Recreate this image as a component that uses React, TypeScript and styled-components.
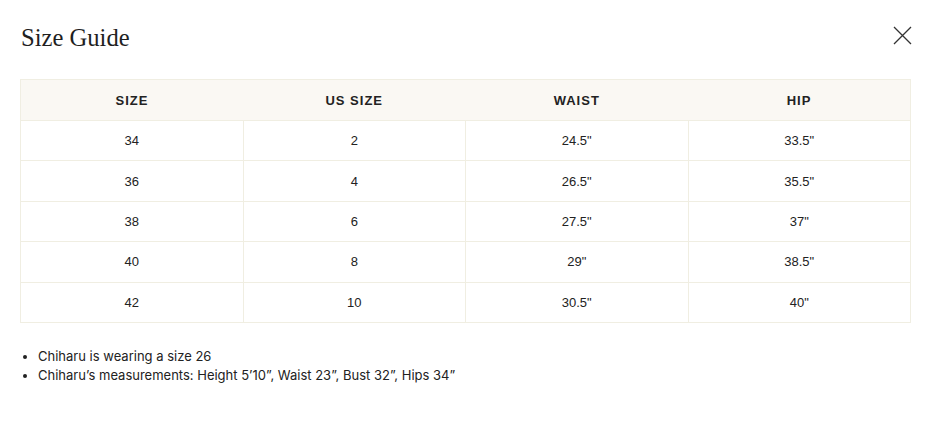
import React from "react";
import styled, { createGlobalStyle } from "styled-components";

const Global = createGlobalStyle`
  html, body { margin: 0; padding: 0; background: #ffffff; }
  body { font-family: "Liberation Sans", Arial, sans-serif; color: #222; }
`;

const Modal = styled.div`
  width: 927px;
  height: 435px;
  box-sizing: border-box;
  padding: 18px 15px 0 20px;
  display: flex;
  flex-direction: column;
`;

const Header = styled.div`
  display: flex;
  justify-content: space-between;
  align-items: center;
  height: 40px;
  margin-bottom: 21px;
`;

const Title = styled.h2`
  margin: 0 0 0 1px;
  font-family: "Liberation Serif", "Times New Roman", serif;
  font-weight: 400;
  font-size: 24.6px;
  color: #1f1f1f;
`;

const CloseButton = styled.button`
  border: 0;
  background: none;
  padding: 0;
  width: 19px;
  height: 19px;
  display: flex;
  align-items: center;
  justify-content: center;
  cursor: pointer;
  margin-top: -6px;
`;

const Table = styled.table`
  width: 891px;
  border-collapse: collapse;
  table-layout: fixed;
  border: 1px solid #f0eee2;
`;

const HeadCell = styled.th`
  height: 40px;
  padding: 0;
  background: #faf8f3;
  font-size: 13px;
  font-weight: 700;
  letter-spacing: 1px;
  color: #222;
  text-align: center;
  border: 0;
`;

const Cell = styled.td`
  height: 39.4px;
  padding: 0;
  font-size: 13px;
  color: #222;
  text-align: center;
  border: 1px solid #f0eee2;
`;

const Notes = styled.ul`
  margin: 24px 0 0 0;
  padding: 0 0 0 18px;
  font-family: "Inter", "Liberation Sans", sans-serif;
  font-size: 13px;
  line-height: 19px;
  color: #222;
`;

const headers = ["SIZE", "US SIZE", "WAIST", "HIP"];
const rows = [
  ["34", "2", "24.5\"", "33.5\""],
  ["36", "4", "26.5\"", "35.5\""],
  ["38", "6", "27.5\"", "37\""],
  ["40", "8", "29\"", "38.5\""],
  ["42", "10", "30.5\"", "40\""],
];

export default function App() {
  return (
    <>
      <Global />
      <Modal>
        <Header>
          <Title>Size Guide</Title>
          <CloseButton aria-label="Close">
            <svg width="19" height="19" viewBox="0 0 19 19">
              <path d="M1 1L18 18M18 1L1 18" stroke="#333" strokeWidth="1.3" fill="none" />
            </svg>
          </CloseButton>
        </Header>
        <Table>
          <thead>
            <tr>
              {headers.map((h) => (
                <HeadCell key={h}>{h}</HeadCell>
              ))}
            </tr>
          </thead>
          <tbody>
            {rows.map((r) => (
              <tr key={r[0]}>
                {r.map((c, i) => (
                  <Cell key={i}>{c}</Cell>
                ))}
              </tr>
            ))}
          </tbody>
        </Table>
        <Notes>
          <li>Chiharu is wearing a size 26</li>
          <li>Chiharu’s measurements: Height 5’10”, Waist 23”, Bust 32”, Hips 34”</li>
        </Notes>
      </Modal>
    </>
  );
}
